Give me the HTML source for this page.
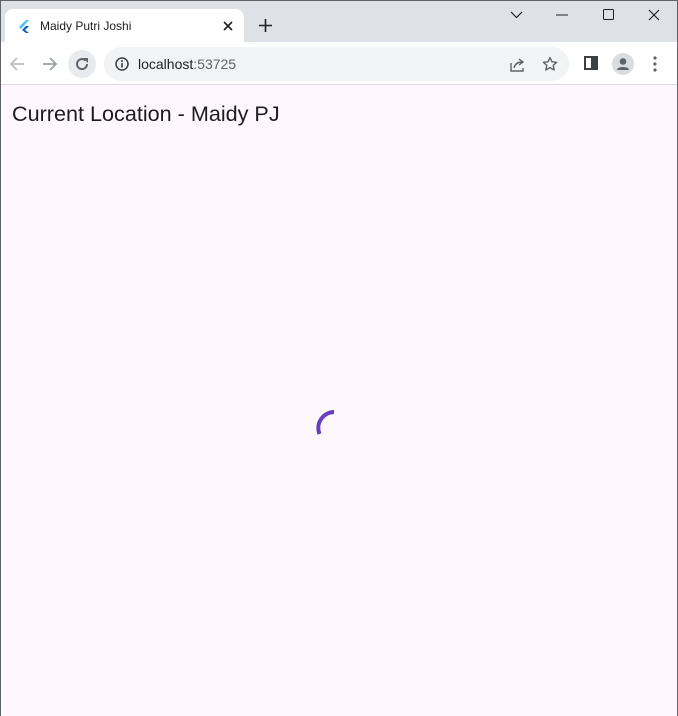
<!DOCTYPE html>
<html><head><style>
*{margin:0;padding:0;box-sizing:border-box}
body{width:678px;height:716px;overflow:hidden;background:#fef8fe;font-family:"Liberation Sans",sans-serif;position:relative}
.frame{position:absolute;inset:0;border:1px solid #5f6368;border-bottom:none;pointer-events:none;z-index:9}
.titlebar{position:absolute;left:0;top:0;width:678px;height:42px;background:#dee1e6}
.tab{position:absolute;left:5px;top:9px;width:239px;height:34px;background:#fff;border-radius:8px 8px 0 0}
.tab .t{position:absolute;left:35px;top:10px;font-size:12px;color:#202124}
.toolbar{position:absolute;left:0;top:42px;width:678px;height:43px;background:#fff;border-bottom:1px solid #dadce0}
.omni{position:absolute;left:104px;top:5px;width:465px;height:34px;background:#f1f3f4;border-radius:17px}
.omni .u{position:absolute;left:34px;top:9px;font-size:14px;color:#202124}
.omni .u span{color:#5f6368}
h1{position:absolute;left:12px;top:101px;font-weight:normal;font-size:21.6px;color:#1d1b20}
svg{position:absolute}
</style></head><body>
<div class="frame"></div>
<div class="titlebar">
<div class="tab"><div class="t">Maidy Putri Joshi</div>
<svg style="left:13px;top:11px" width="12" height="13" viewBox="0 0 12 13"><path d="M8 0L1 7l2 2 8-9z" fill="#47c5fb"/><path d="M8 6L4 10l4 3h3L7 10l4-4z" fill="#0a5bb0"/></svg>
<svg style="left:218px;top:12px" width="10" height="10"><path d="M1 1L9 9M9 1L1 9" stroke="#202124" stroke-width="1.6"/></svg>
</div>
<svg style="left:259px;top:19px" width="13" height="13"><path d="M6.5 0V13M0 6.5H13" stroke="#202124" stroke-width="1.6"/></svg>
<svg style="left:510px;top:11px" width="13" height="8"><path d="M1 1L6.5 6.5L12 1" stroke="#202124" stroke-width="1.2" fill="none"/></svg>
<svg style="left:556px;top:14px" width="12" height="2"><path d="M0 1H12" stroke="#202124"/></svg>
<svg style="left:603px;top:9px" width="11" height="11"><rect x=".5" y=".5" width="10" height="10" rx="1" fill="none" stroke="#202124"/></svg>
<svg style="left:648px;top:9px" width="12" height="12"><path d="M1 1L11 11M11 1L1 11" stroke="#202124" stroke-width="1.2"/></svg>
</div>
<div class="toolbar">
<svg style="left:9px;top:14px" width="16" height="16"><path d="M15 8H2M8 2L2 8l6 6" stroke="#bcbec2" stroke-width="1.8" fill="none"/></svg>
<svg style="left:42px;top:14px" width="16" height="16"><path d="M1 8H14M8 2l6 6-6 6" stroke="#9aa0a6" stroke-width="1.8" fill="none"/></svg>
<div style="position:absolute;left:68px;top:8px;width:28px;height:28px;border-radius:14px;background:#e8eaed"></div>
<svg style="left:74px;top:14px" width="16" height="16"><path d="M13 8A5 5 0 1 1 11.5 4.5" stroke="#5f6368" stroke-width="2" fill="none"/><path d="M9 2h5v5z" fill="#5f6368"/></svg>
<div class="omni"><svg style="left:11px;top:10px" width="14" height="14"><circle cx="7" cy="7" r="6" fill="none" stroke="#3c4043" stroke-width="1.5"/><path d="M7 6v4.5" stroke="#3c4043" stroke-width="1.6"/><circle cx="7" cy="4" r="1" fill="#3c4043"/></svg>
<div class="u">localhost<span>:53725</span></div>
<svg style="left:406px;top:10px" width="16" height="15"><path d="M1 6v8h12v-3" stroke="#5f6368" stroke-width="1.4" fill="none"/><path d="M4 11c1-4 4-6 8-6M9 2l4 3-4 3" stroke="#5f6368" stroke-width="1.4" fill="none"/></svg>
<svg style="left:438px;top:9px" width="16" height="16"><path d="M8 1.5l2 4.3 4.6.5-3.4 3.1 1 4.6L8 11.6 3.8 14l1-4.6L1.4 6.3 6 5.8z" stroke="#5f6368" stroke-width="1.4" fill="none" stroke-linejoin="round"/></svg>
</div>
<svg style="left:584px;top:14px" width="14" height="14"><rect x="1" y="1" width="12" height="12" fill="none" stroke="#3c4043" stroke-width="2"/><rect x="7" y="1" width="6" height="12" fill="#3c4043"/></svg>
<div style="position:absolute;left:612px;top:11px;width:22px;height:22px;border-radius:11px;background:#dadce0;overflow:hidden"><svg style="left:0;top:0" width="22" height="22"><circle cx="11" cy="8.5" r="3.3" fill="#5f6368"/><path d="M5 17c0-4 12-4 12 0z" fill="#5f6368"/></svg></div>
<svg style="left:653px;top:14px" width="4" height="16"><circle cx="2" cy="2" r="1.6" fill="#5f6368"/><circle cx="2" cy="8" r="1.6" fill="#5f6368"/><circle cx="2" cy="14" r="1.6" fill="#5f6368"/></svg>
</div>
<h1>Current Location - Maidy PJ</h1>
<svg style="left:310px;top:404px" width="48" height="48"><path d="M24 8A16 16 0 0 0 9.5 30" stroke="#6a3fbf" stroke-width="4" fill="none"/></svg>
</body></html>
